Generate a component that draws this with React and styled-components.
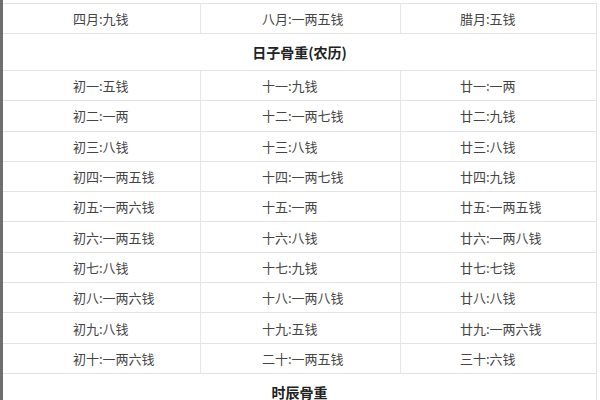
import React from "react";
import styled, { createGlobalStyle } from "styled-components";

const Global = createGlobalStyle`
  html, body { margin: 0; padding: 0; background: #fff; }
  body { font-family: "Noto Sans CJK SC", "Noto Sans", sans-serif; }
`;

const Page = styled.div`
  width: 600px;
  height: 400px;
  overflow: hidden;
  box-sizing: border-box;
  border-left: 3px solid #6e6e6e;
  padding-top: 3px;
  padding-right: 3px;
  background: #fff;
`;

const Table = styled.div`
  border-top: 1px solid #e3e3e3;
  border-right: 1px solid #e3e3e3;
`;

const Row = styled.div`
  display: grid;
  grid-template-columns: 197px 200px 196px;
  height: ${(p) => p.$h}px;
  box-sizing: border-box;
  border-bottom: 1px solid #e3e3e3;
`;

const Cell = styled.div`
  display: flex;
  align-items: center;
  padding-left: ${(p) => p.$pad}px;
  font-size: 13px;
  color: #444;
  white-space: nowrap;
  border-left: ${(p) => (p.$first ? "none" : "1px solid #e6e6e6")};
  box-sizing: border-box;
`;

const Header = styled.div`
  height: ${(p) => p.$h}px;
  box-sizing: border-box;
  border-bottom: 1px solid #e3e3e3;
  display: flex;
  align-items: center;
  justify-content: center;
  font-size: 14px;
  font-weight: 700;
  color: #222;
`;

const pads = [70, 61, 59];

const days = [
  ["初一:五钱", "十一:九钱", "廿一:一两"],
  ["初二:一两", "十二:一两七钱", "廿二:九钱"],
  ["初三:八钱", "十三:八钱", "廿三:八钱"],
  ["初四:一两五钱", "十四:一两七钱", "廿四:九钱"],
  ["初五:一两六钱", "十五:一两", "廿五:一两五钱"],
  ["初六:一两五钱", "十六:八钱", "廿六:一两八钱"],
  ["初七:八钱", "十七:九钱", "廿七:七钱"],
  ["初八:一两六钱", "十八:一两八钱", "廿八:八钱"],
  ["初九:八钱", "十九:五钱", "廿九:一两六钱"],
  ["初十:一两六钱", "二十:一两五钱", "三十:六钱"],
];

function DataRow({ cells, h }) {
  return (
    <Row $h={h}>
      {cells.map((c, i) => (
        <Cell key={i} $pad={pads[i]} $first={i === 0}>
          {c}
        </Cell>
      ))}
    </Row>
  );
}

export default function App() {
  return (
    <>
      <Global />
      <Page>
        <Table>
          <DataRow h={30} cells={["四月:九钱", "八月:一两五钱", "腊月:五钱"]} />
          <Header $h={37}>日子骨重(农历)</Header>
          {days.map((d, i) => (
            <DataRow key={i} h={30.3} cells={d} />
          ))}
          <Header $h={37}>时辰骨重</Header>
        </Table>
      </Page>
    </>
  );
}
